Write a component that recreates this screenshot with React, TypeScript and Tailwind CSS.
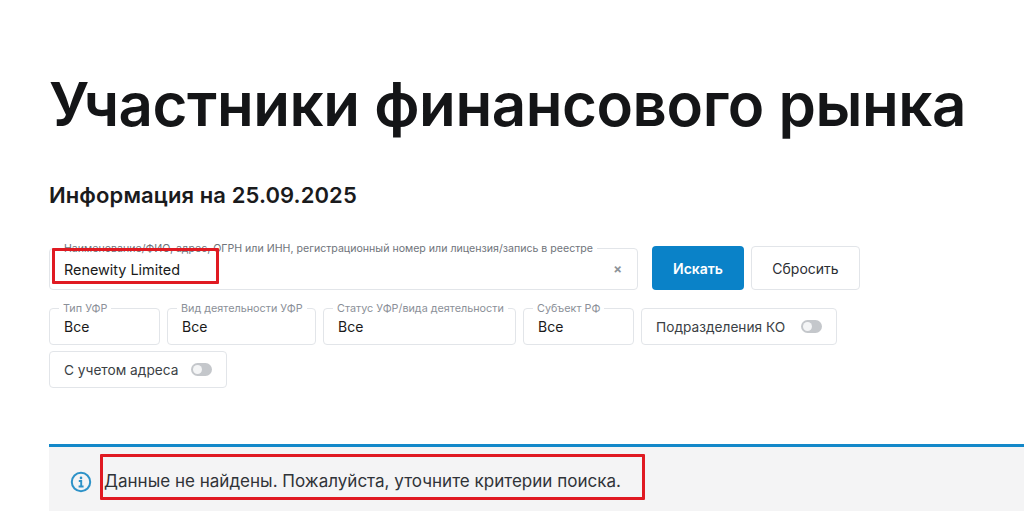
import React from "react";

function Field({ label, value, className }: { label: string; value: string; className: string }) {
  return (
    <div className={`relative h-[37px] rounded-[4px] border border-[#e2e5e9] bg-white pl-[14px] flex items-center ${className}`}>
      <span className="absolute left-[9px] top-[-7px] bg-white px-[4px] text-[10.8px] leading-[14px] text-[#8b9098] whitespace-nowrap">{label}</span>
      <span className="text-[14px] leading-[18px] pt-[1px] text-[#1a1a1a]">{value}</span>
    </div>
  );
}

function Toggle({ label, className }: { label: string; className: string }) {
  return (
    <div className={`h-[37px] rounded-[4px] border border-[#e2e5e9] bg-white pl-[14px] flex items-center justify-between ${className}`}>
      <span className="pt-[1px] text-[13.7px] leading-[18px] text-[#3b3f45]">{label}</span>
      <span className="flex h-[13px] w-[21px] items-center justify-start rounded-full bg-[#c4c7cb] pl-[2px]">
        <span className="h-[9px] w-[9px] rounded-full bg-[#f4f5f6]" />
      </span>
    </div>
  );
}

export default function App() {
  return (
    <div className="h-[518px] w-[1024px] overflow-hidden bg-white font-['Inter',sans-serif]">
      <div className="pl-[49px] pt-[68px]">
        <h1 className="text-[60px] leading-[72px] font-semibold tracking-[-0.44px] text-[#141517] whitespace-nowrap">Участники финансового рынка</h1>
        <h2 className="mt-[42px] text-[22px] leading-[26px] font-semibold tracking-[0.1px] text-[#1a1b1d]">Информация на 25.09.2025</h2>

        <div className="relative mt-[38px] flex w-[975px] items-end">
          <div className="relative flex h-[42px] w-[589px] items-center justify-between rounded-[4px] border border-[#e2e5e9] pl-[14px] pr-[15px]">
            <span className="absolute left-[10px] top-[-7px] bg-white px-[4px] text-[10.6px] leading-[14px] text-[#6f747b] whitespace-nowrap">
              Наименование/ФИО, адрес, ОГРН или ИНН, регистрационный номер или лицензия/запись в реестре
            </span>
            <span className="pt-[2px] text-[14.4px] leading-[18px] text-[#1a1a1a]">Renewity Limited</span>
            <span className="text-[13px] font-bold leading-[14px] text-[#8e9399]">×</span>
          </div>
          <button className="ml-[14px] h-[44px] w-[92px] rounded-[4px] bg-[#0a82c8] text-[14px] font-semibold text-white">Искать</button>
          <button className="ml-[7px] h-[44px] w-[109px] rounded-[4px] border border-[#e2e5e9] bg-white text-[14px] text-[#2b2e33]">Сбросить</button>
        </div>

        <div className="mt-[18px] flex w-[800px] flex-wrap gap-x-[7px] gap-y-[6px]">
          <Field label="Тип УФР" value="Все" className="w-[111px]" />
          <Field label="Вид деятельности УФР" value="Все" className="w-[149px]" />
          <Field label="Статус УФР/вида деятельности" value="Все" className="w-[193px]" />
          <Field label="Субъект РФ" value="Все" className="w-[111px]" />
          <Toggle label="Подразделения КО" className="w-[196px] pr-[14px]" />
          <Toggle label="С учетом адреса" className="w-[178px] pr-[14px]" />
        </div>

        <div className="mt-[56px] flex h-[67px] items-center border-t-[3px] border-[#1388c9] bg-[#f4f4f5] pl-[21px]">
          <svg width="22" height="22" viewBox="0 0 22 22" fill="none" className="mt-[6px] shrink-0">
            <circle cx="11" cy="11" r="9.2" stroke="#2d92c8" strokeWidth="2" />
            <circle cx="11" cy="6.9" r="1.3" fill="#2d92c8" />
            <path d="M8.8 10h2.4v5.4M8.6 15.5h5" stroke="#2d92c8" strokeWidth="1.9" />
          </svg>
          <span className="ml-[12px] pt-[4px] text-[17.05px] leading-[22px] text-[#303338] whitespace-nowrap">Данные не найдены. Пожалуйста, уточните критерии поиска.</span>
        </div>
      </div>

      <div className="pointer-events-none absolute left-[52px] top-[248px] h-[36px] w-[167px] rounded-[1px] border-[3px] border-[#e01a22]" />
      <div className="pointer-events-none absolute left-[100px] top-[454px] h-[46px] w-[545px] rounded-[1px] border-[3px] border-[#e01a22]" />
    </div>
  );
}
